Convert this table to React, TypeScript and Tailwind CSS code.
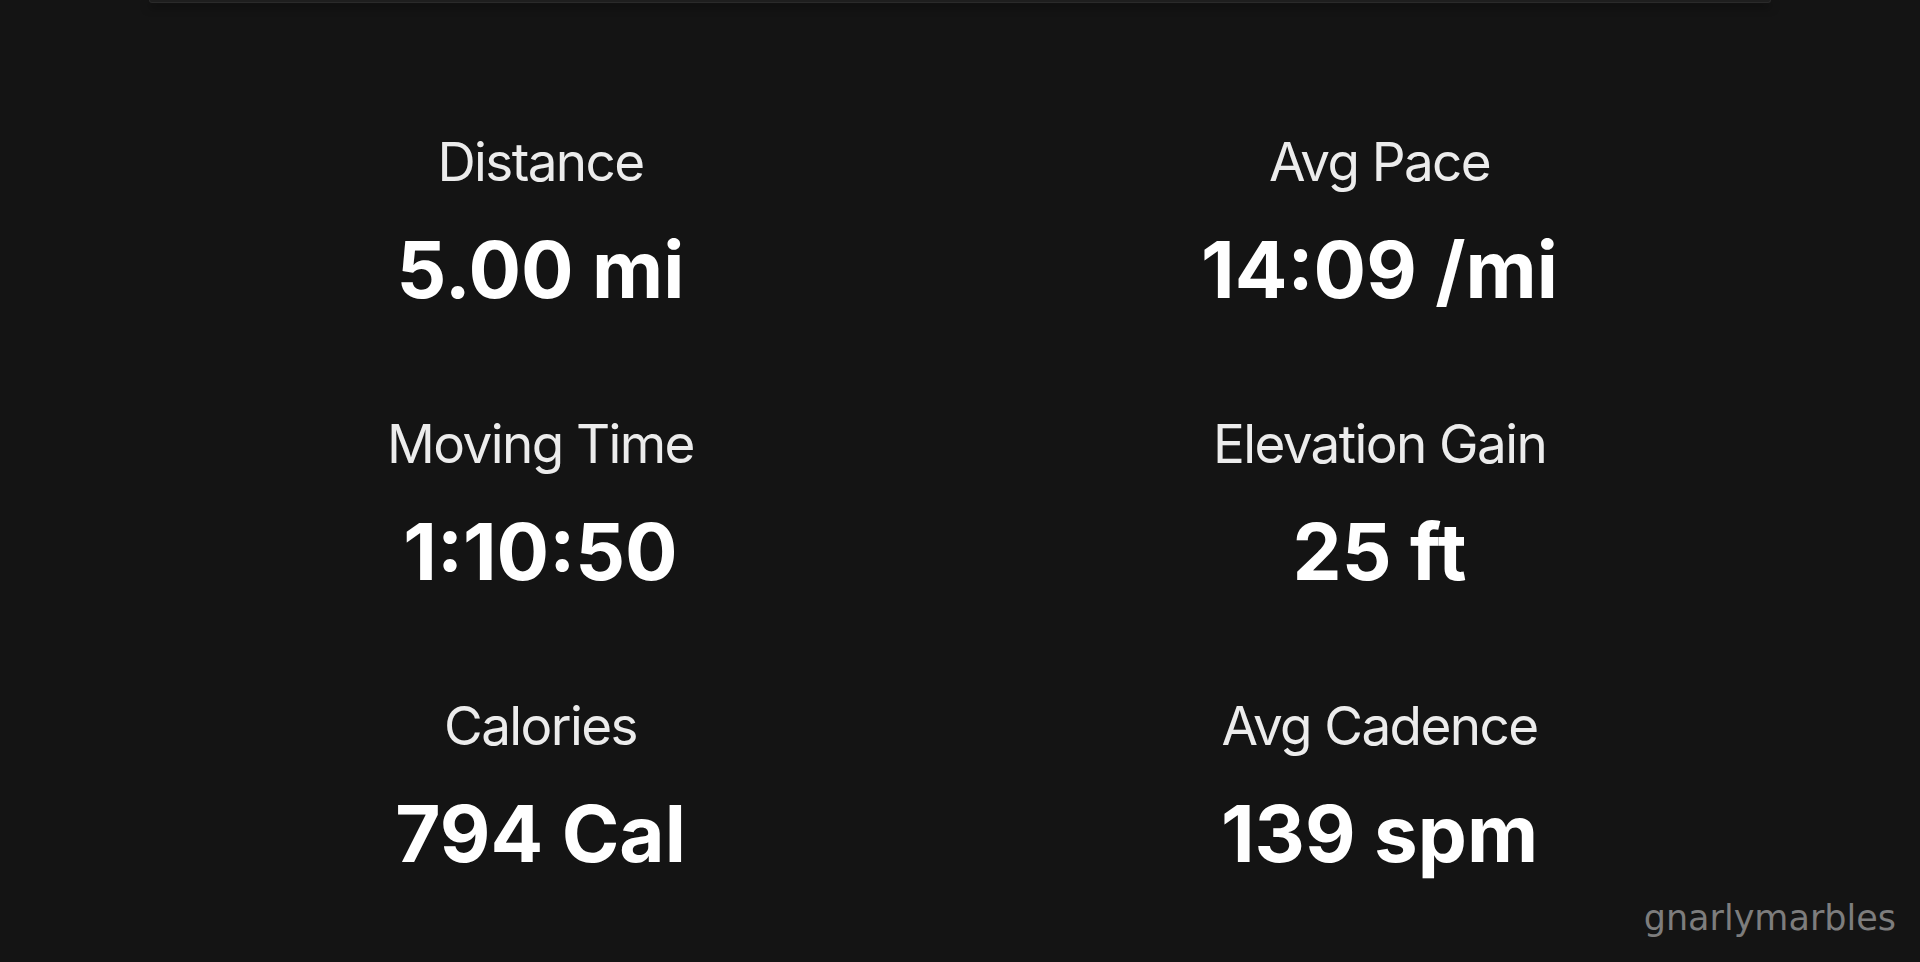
import React from "react";

const stats = [
  { label: "Distance", value: "5.00 mi" },
  { label: "Avg Pace", value: "14:09 /mi" },
  { label: "Moving Time", value: "1:10:50" },
  { label: "Elevation Gain", value: "25 ft" },
  { label: "Calories", value: "794 Cal" },
  { label: "Avg Cadence", value: "139 spm" },
];

function Stat({ label, value }: { label: string; value: string }) {
  return (
    <div className="flex flex-col items-center gap-[42px]">
      <span className="text-[53px] leading-[53px] font-normal tracking-[-0.03em] text-[#ececec]">
        {label}
      </span>
      <span className="text-[78px] leading-[78px] font-bold text-white">
        {value}
      </span>
    </div>
  );
}

export default function App() {
  return (
    <div
      className="relative h-[962px] w-full overflow-hidden bg-[#141414]"
      style={{ fontFamily: "Inter, 'Liberation Sans', sans-serif" }}
    >
      <div className="mx-[149px] h-[3px] rounded-b-[10px] border-x border-b border-[#2a2a2a] bg-[#1e1e1e] shadow-[0_4px_8px_rgba(0,0,0,0.6)]" />
      <div className="mx-auto mt-[133px] grid w-[1678px] grid-cols-2 gap-y-[109px]">
        {stats.map((s) => (
          <Stat key={s.label} label={s.label} value={s.value} />
        ))}
      </div>
      <span
        className="absolute right-[24px] bottom-[18px] text-[35px] text-[#7d7d7d]"
        style={{ fontFamily: "'DejaVu Sans', sans-serif" }}
      >
        gnarlymarbles
      </span>
    </div>
  );
}
